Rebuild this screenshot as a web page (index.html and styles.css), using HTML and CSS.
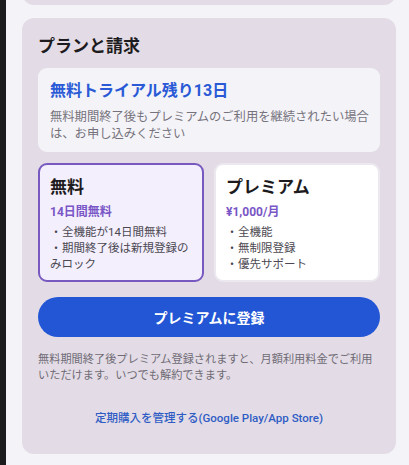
FILE: index.html
```html
<!DOCTYPE html>
<html lang="ja">
<head>
<meta charset="utf-8">
<link rel="stylesheet" href="styles.css">
</head>
<body>
<div class="shell">
  <div class="edge"></div>
  <main class="page">
    <div class="card card-prev"></div>
    <section class="card billing">
      <h2 class="billing-title">プランと請求</h2>
      <div class="trial">
        <div class="trial-head">無料トライアル残り13日</div>
        <p class="trial-desc">無料期間終了後もプレミアムのご利用を継続されたい場合は、お申し込みください</p>
      </div>
      <div class="plans">
        <div class="plan plan-active">
          <div class="plan-name">無料</div>
          <div class="plan-price">14日間無料</div>
          <ul class="plan-list">
            <li>全機能が14日間無料</li>
            <li>期間終了後は新規登録のみロック</li>
          </ul>
        </div>
        <div class="plan">
          <div class="plan-name">プレミアム</div>
          <div class="plan-price">¥1,000/月</div>
          <ul class="plan-list">
            <li>全機能</li>
            <li>無制限登録</li>
            <li>優先サポート</li>
          </ul>
        </div>
      </div>
      <button class="subscribe">プレミアムに登録</button>
      <p class="note">無料期間終了後プレミアム登録されますと、月額利用料金でご利用いただけます。いつでも解約できます。</p>
      <a class="manage">定期購入を管理する(Google Play/App Store)</a>
    </section>
  </main>
</div>
</body>
</html>
```

FILE: styles.css
```css
* { box-sizing: border-box; }
html, body { margin: 0; padding: 0; }
body {
  background: #f4f4f8;
  font-family: Roboto, "Noto Sans CJK JP", sans-serif;
  color: #1d1b20;
}
.shell {
  display: flex;
  min-height: 465px;
}
.edge {
  width: 6px;
  flex: none;
  background: #1b1b1d;
}
.page {
  flex: 1;
  padding: 0 13px 0 16px;
  overflow: hidden;
}
.card {
  background: #e3dce6;
  border-radius: 12px;
}
.card-prev {
  height: 25px;
  margin-top: -20px;
}
.billing {
  margin-top: 13px;
  padding: 16px 16px 16px 16px;
  display: flex;
  flex-direction: column;
}
.billing-title {
  margin: 0;
  font-size: 17px;
  line-height: 24px;
  font-weight: 700;
  color: #1d1b20;
}
.trial {
  margin-top: 10px;
  background: #f4f4f8;
  border-radius: 9px;
  padding: 12px 8px 9px 12px;
}
.trial-head {
  font-size: 16px;
  line-height: 22px;
  font-weight: 700;
  color: #2a5ad6;
}
.trial-desc {
  margin: 7px 0 0;
  font-size: 12.3px;
  line-height: 17px;
  color: #76727c;
}
.plans {
  margin-top: 11px;
  display: grid;
  grid-template-columns: 1fr 1fr;
  gap: 10px;
}
.plan {
  background: #ffffff;
  border: 2px solid #ece8ef;
  border-radius: 9px;
  padding: 10px 10px 8px;
}
.plan-active {
  background: #f3effd;
  border-color: #7759c0;
}
.plan-name {
  font-size: 17px;
  line-height: 24px;
  font-weight: 700;
  color: #1d1b20;
}
.plan-price {
  margin-top: 5px;
  font-size: 12px;
  line-height: 16px;
  font-weight: 700;
  color: #7a56c6;
}
.plan-list {
  list-style: none;
  margin: 4px 0 0;
  padding: 0;
  font-size: 11.5px;
  line-height: 16px;
  color: #4b4851;
}
.plan-list li::before {
  content: "・";
  display: inline-block;
  width: 12px;
  text-align: center;
}
.subscribe {
  margin-top: 15px;
  height: 40px;
  border: none;
  border-radius: 20px;
  background: #2256d5;
  color: #ffffff;
  font-family: Roboto, "Noto Sans CJK JP", sans-serif;
  font-size: 14px;
  font-weight: 700;
}
.note {
  margin: 15px 0 0;
  font-size: 11.2px;
  line-height: 16px;
  color: #6f6b75;
}
.manage {
  margin-top: 14px;
  padding: 12px 0;
  text-align: center;
  font-size: 11.5px;
  line-height: 16px;
  font-weight: 500;
  color: #2f5cc4;
}
```
